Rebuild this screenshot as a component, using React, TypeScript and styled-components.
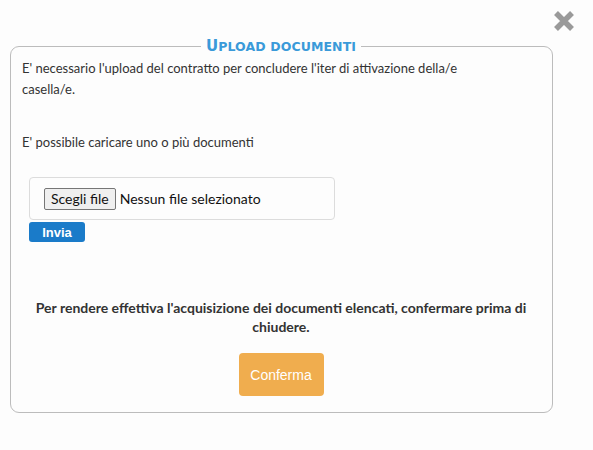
import React from "react";
import styled, { createGlobalStyle } from "styled-components";

const Global = createGlobalStyle`
  html, body { margin: 0; padding: 0; background: #fdfdfd; }
  body { font-family: Lato, "Open Sans", sans-serif; font-size: 13px; color: #333; }
`;

const Page = styled.div`
  width: 593px;
  height: 450px;
  box-sizing: border-box;
  padding: 8px 16px 0 10px;
  display: flex;
  flex-direction: column;
`;

const Header = styled.div`
  display: flex;
  justify-content: flex-end;
  height: 29px;
`;

const CloseButton = styled.button`
  width: 26px;
  height: 26px;
  border: 0;
  padding: 0;
  background: transparent;
  display: flex;
  align-items: center;
  justify-content: center;
  cursor: pointer;
`;

const Fieldset = styled.fieldset`
  margin: 0;
  width: 543px;
  height: 376px;
  box-sizing: border-box;
  border: 1px solid #bcbcbc;
  border-radius: 9px;
  padding: 0 12px 0 11px;
  display: flex;
  flex-direction: column;
`;

const Legend = styled.legend`
  margin: 0 auto;
  padding: 0 5px;
  font-family: "DejaVu Sans", Verdana, sans-serif;
  text-transform: uppercase;
  font-weight: bold;
  font-size: 12.5px;
  letter-spacing: 0.1px;
  color: #3a9ad9;
  &::first-letter {
    font-size: 15px;
  }
`;

const Paragraph = styled.p<{ $gap?: number }>`
  margin: ${(p) => p.$gap ?? 0}px 0 0;
  max-width: 490px;
  line-height: 21px;
  color: #333;
`;

const FileBox = styled.div`
  margin: 24px 0 0 7px;
  width: 306px;
  height: 43px;
  box-sizing: border-box;
  border: 1px solid #dcdcdc;
  border-radius: 4px;
  display: flex;
  align-items: center;
  padding-left: 14px;
  gap: 4px;
`;

const ChooseButton = styled.span`
  display: inline-flex;
  align-items: center;
  height: 22px;
  box-sizing: border-box;
  padding: 0 6px;
  border: 1px solid #767676;
  border-radius: 2px;
  background: #efefef;
  font-size: 14px;
  color: #111;
`;

const FileName = styled.span`
  font-size: 14px;
  color: #111;
`;

const SendButton = styled.button`
  margin: 2px 0 0 7px;
  align-self: flex-start;
  width: 56px;
  height: 20px;
  border: 0;
  border-radius: 3px;
  background: #1a7bc9;
  color: #fff;
  font-family: "Liberation Sans", Arial, sans-serif;
  font-weight: bold;
  font-size: 13px;
  padding: 0;
`;

const Notice = styled.p`
  margin: 56px 0 0;
  width: 510px;
  align-self: center;
  text-align: center;
  font-weight: bold;
  font-size: 14px;
  line-height: 19px;
  color: #333;
`;

const ConfirmButton = styled.button`
  margin: 17px auto 0;
  width: 85px;
  height: 43px;
  border: 0;
  border-radius: 4px;
  background: #f0ad4e;
  color: #fff;
  font-family: "Liberation Sans", Arial, sans-serif;
  font-size: 14px;
  padding: 0;
`;

export default function App() {
  return (
    <>
      <Global />
      <Page>
        <Header>
          <CloseButton aria-label="Chiudi">
            <svg width="24" height="24" viewBox="0 0 24 24">
              <path d="M4 4 L20 20 M20 4 L4 20" stroke="#9a9a9a" strokeWidth="5.5" strokeLinecap="butt" />
            </svg>
          </CloseButton>
        </Header>
        <Fieldset>
          <Legend>Upload documenti</Legend>
          <Paragraph $gap={3}>
            E' necessario l'upload del contratto per concludere l'iter di attivazione della/e casella/e.
          </Paragraph>
          <Paragraph $gap={32}>E' possibile caricare uno o più documenti</Paragraph>
          <FileBox>
            <ChooseButton>Scegli file</ChooseButton>
            <FileName>Nessun file selezionato</FileName>
          </FileBox>
          <SendButton>Invia</SendButton>
          <Notice>
            Per rendere effettiva l'acquisizione dei documenti elencati, confermare prima di chiudere.
          </Notice>
          <ConfirmButton>Conferma</ConfirmButton>
        </Fieldset>
      </Page>
    </>
  );
}
